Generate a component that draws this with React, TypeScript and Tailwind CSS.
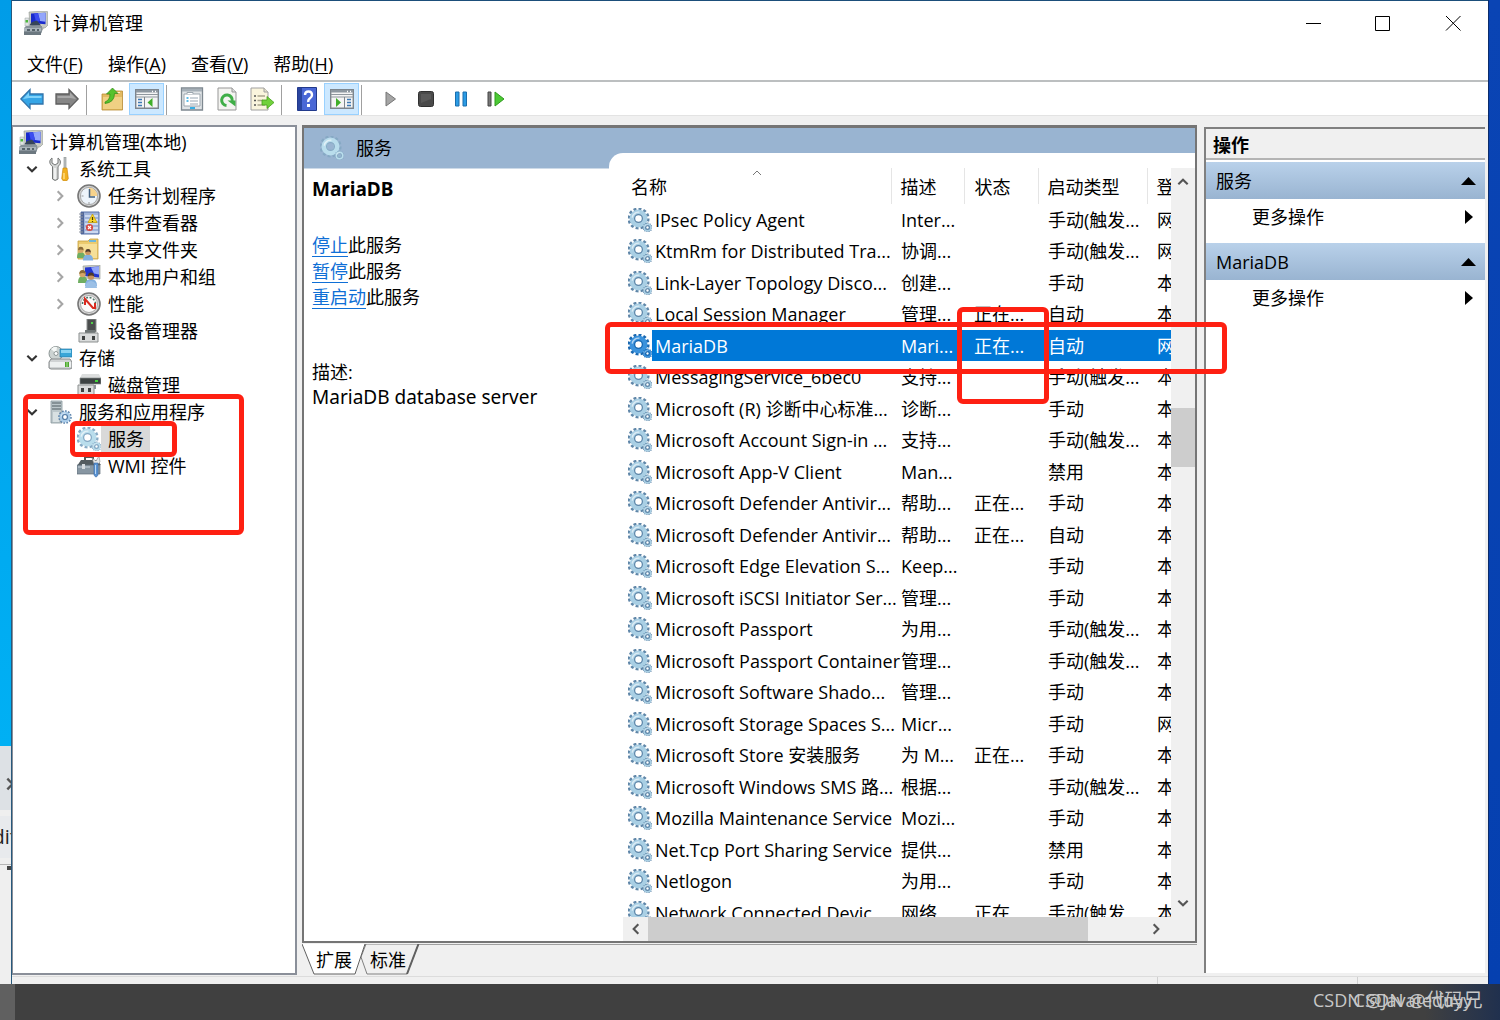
import React from "react";

type IconProps = { className?: string };

const svgBase = { viewBox: "0 0 24 24", "aria-hidden": true } as const;

function ComputerIcon({ className = "size-6 shrink-0" }: IconProps) {
  return (
    <svg {...svgBase} className={className}>
      <path d="M5 1 22 0l2 1v13l-3 3-15-3z" fill="#c9ccc4" stroke="#8f958f" strokeWidth=".6" />
      <path d="M7 2.500 21.500 1.800v11.400L7 12z" fill="#1a2bcc" />
      <path d="M14 2.200 21.500 1.800v9L16 10z" fill="#93a6fb" />
      <path d="M10 2.400 14 2.200 16 10 12 11z" fill="#3c4df0" />
      <path d="M1 7h4v8H1z" fill="#dfe3e3" stroke="#98a0a0" strokeWidth=".5" />
      <path d="M1.500 9h2.500v2.500H1.500z" fill="#4db83c" />
      <path d="M8 11 13 9.500l4 5H5z" fill="#36455a" />
      <path d="M14 17h6l-2 3h-3z" fill="#a8aca8" />
      <path d="M0 17 2 15h16v6l-2 3H0z" fill="#87929a" />
      <path d="M0 17h17v3H0z" fill="#aab4ba" />
      <path d="M3 18h3v2H3zM8 18h3v2H8zM13 18h2v2h-2z" fill="#55626a" />
      <path d="M0 21h17v3H0z" fill="#6c7880" />
    </svg>
  );
}

function Gear({ cx, cy, r, hole, fill, edge }: { cx: number; cy: number; r: number; hole: number; fill: string; edge: string }) {
  return (
    <g>
      <circle cx={cx} cy={cy} r={r} fill="none" stroke={edge} strokeWidth={r * 0.46} pathLength={24} strokeDasharray="1.150 .850" />
      <circle cx={cx} cy={cy} r={(r + hole) / 2} fill="none" stroke={fill} strokeWidth={r - hole} />
      <circle cx={cx} cy={cy} r={hole + 0.5} fill="none" stroke={edge} strokeWidth="1.200" />
      <path d={`M${cx - r * 0.7} ${cy - r * 0.1}A${r * 0.72} ${r * 0.72} 0 0 1 ${cx + r * 0.1} ${cy - r * 0.7}`} fill="none" stroke="#ffffff" strokeOpacity=".6" strokeWidth={r * 0.16} />
    </g>
  );
}

function ServiceIcon({ className = "size-6 shrink-0", tone = "normal" }: IconProps & { tone?: "normal" | "selected" | "pale" }) {
  const fill = tone === "selected" ? "#3b92dc" : tone === "pale" ? "#b9ddec" : "#a9cfe4";
  const edge = tone === "selected" ? "#1967b0" : tone === "pale" ? "#86a9c4" : "#5f86a8";
  return (
    <svg {...svgBase} className={className}>
      <Gear cx={10.500} cy={10.500} r={9} hole={3.400} fill={fill} edge={edge} />
      <Gear cx={19.500} cy={19.500} r={4} hole={1.400} fill={fill} edge={edge} />
    </svg>
  );
}

function ToolsIcon() {
  return (
    <svg {...svgBase} className="size-6 shrink-0">
      <path d="M4 1v5l3 2 3-2V1c3 2 3.500 6 0 8.500V22q-3 3-5.500 0V9.500C1 7 1 3 4 1z" fill="#d5d7d6" stroke="#747776" />
      <path d="M7 11v11" stroke="#fff" strokeWidth="1.300" />
      <path d="M16 0h2v12h-2z" fill="#bfc4c5" stroke="#858b8c" strokeWidth=".6" />
      <path d="M15 11h4l.5 4 .8 6.500q-.5 2.500-3.300 2.500t-3.300-2.500L14.500 15z" fill="#f2b01e" stroke="#c47f05" strokeWidth=".6" />
      <path d="M16 16v6" stroke="#ffe08a" strokeWidth="1.400" />
    </svg>
  );
}

function ClockIcon() {
  return (
    <svg {...svgBase} className="size-6 shrink-0">
      <circle cx="12" cy="12" r="11" fill="#d2d3d3" stroke="#777" strokeWidth="1.600" />
      <circle cx="12" cy="12" r="8.600" fill="#edf4fb" stroke="#9a9a9a" strokeWidth=".8" />
      <path d="M12 12V3.700A8.300 8.300 0 0 1 20.300 12z" fill="#f7d38c" />
      <path d="M12.500 5v8H18" fill="none" stroke="#45617f" strokeWidth="1.500" />
      <path d="M4.500 12h2M12 18v2" stroke="#999" />
    </svg>
  );
}

function EventIcon() {
  return (
    <svg {...svgBase} className="size-6 shrink-0">
      <path d="M4 1h18v22H4z" fill="#9fb3da" stroke="#5670a8" />
      <path d="M8 5h13M8 9h13M8 13h13M8 17h13M8 21h13" stroke="#dce6f8" strokeWidth="1.400" />
      <path d="M4 1h3v22H4z" fill="#50669a" />
      <path d="M2 3h4M2 6h4M2 9h4M2 12h4M2 15h4M2 18h4M2 21h4" stroke="#8d939e" />
      <path d="m15.500 3 4.500 8.500h-9z" fill="#f8d52a" stroke="#c39b00" strokeWidth=".7" />
      <path d="M15.500 6v3M15.500 10v1" stroke="#493b00" strokeWidth="1.200" />
      <circle cx="12.500" cy="16.500" r="3.600" fill="#d84a43" />
      <path d="m11 15 3 3m0-3-3 3" stroke="#fff" strokeWidth="1.100" />
    </svg>
  );
}

function People({ x, y }: { x: number; y: number }) {
  return (
    <g transform={`translate(${x} ${y})`}>
      <path d="M0 13q0-7 4.500-7T10 13z" fill="#6fae61" />
      <circle cx="4.500" cy="4" r="3.200" fill="#d6a768" />
      <path d="M1.300 4q0-4 3.200-4t3.200 4q-3-2-6.400 0z" fill="#8a6a36" />
      <path d="M7 16q0-7 6-7t6 7z" fill="#83b0df" />
      <circle cx="13" cy="6.500" r="3.200" fill="#c9945f" />
      <path d="M9.800 6.500q0-4 3.200-4t3.200 4q-3-2-6.400 0z" fill="#4d3a2c" />
    </g>
  );
}

function SharedFolderIcon() {
  return (
    <svg {...svgBase} className="size-6 shrink-0">
      <path d="M1 3h10l2-2h8v20H1z" fill="#eccb6f" stroke="#c79f3c" strokeWidth=".8" />
      <path d="M12 2h7v2h-7z" fill="#6fb7d9" />
      <path d="M2 6h18v14H2z" fill="#f6df98" />
      <g transform="translate(0 8) scale(.85)">
        <People x={0} y={1} />
      </g>
    </svg>
  );
}

function UsersIcon() {
  return (
    <svg {...svgBase} className="size-6 shrink-0">
      <path d="M6 1 23 0v14L7 13z" fill="#c9ccc4" stroke="#8f958f" strokeWidth=".6" />
      <path d="m8 2.500 14-1v11L8 11z" fill="#2236cf" />
      <path d="m14 2.500 8-1v8l-5-1z" fill="#91a5fa" />
      <People x={1} y={5} />
      <path d="M8 23q0-6 6-7 6 1 6 7z" fill="#9cc0e6" />
    </svg>
  );
}

function PerfIcon() {
  return (
    <svg {...svgBase} className="size-6 shrink-0">
      <circle cx="12" cy="12" r="11" fill="#d7d7d7" stroke="#777" strokeWidth="1.600" />
      <circle cx="12" cy="12" r="8.500" fill="#fbfbfb" stroke="#999" strokeWidth=".8" />
      <path d="M5.500 12a6.500 6.500 0 0 1 13 0" fill="none" stroke="#4a7466" strokeWidth="1.500" strokeDasharray="2 1.500" />
      <path d="M8 13V7l8 9h2v-5" fill="none" stroke="#d92b20" strokeWidth="2" />
    </svg>
  );
}

function DeviceIcon() {
  return (
    <svg {...svgBase} className="size-6 shrink-0">
      <path d="M10 0h9v13h-9z" fill="#4a4d4d" stroke="#8b8f8f" />
      <path d="M14 3h2v2h-2z" fill="#51d148" />
      <path d="M8 11h10v4H8z" fill="#6f7676" />
      <path d="M2 14h19v9H2z" fill="#dadcdc" stroke="#8b8f8f" />
      <path d="M5 17h3v4H5zM15 17h3v4h-3z" fill="#3f4242" />
    </svg>
  );
}

function StorageIcon() {
  return (
    <svg {...svgBase} className="size-6 shrink-0">
      <circle cx="8" cy="7.500" r="7" fill="#ccd3d2" stroke="#8e9796" />
      <path d="M8 7.500 3 3q3-3 6-2z" fill="#f5f8f7" />
      <circle cx="8" cy="7.500" r="2" fill="#fff" stroke="#8e9796" />
      <path d="M12 3h12v8H12z" fill="#39a6d8" stroke="#277aa6" strokeWidth=".7" />
      <path d="M13 4h10v3H13z" fill="#8bd3f1" />
      <path d="m3 13-2 3v6l2 1h19l2-1v-6l-2-3z" fill="#d0d3d4" stroke="#85898a" />
      <path d="M2 16h21v5H2z" fill="#edf0f0" />
      <path d="M17 16h4v5h-4z" fill="#4ca530" />
      <path d="M19 16v5" stroke="#a9e790" />
    </svg>
  );
}

function DiskIcon() {
  return (
    <svg {...svgBase} className="size-6 shrink-0">
      <path d="M5 1h17l2 4H3z" fill="#dcdede" />
      <path d="M3 5h21v6H3z" fill="#3d4343" stroke="#8b8f8f" strokeWidth=".7" />
      <path d="M18 7h3v2h-3z" fill="#42d43b" />
      <path d="M1 12h16v11H1z" fill="#dadcdc" stroke="#8b8f8f" />
      <path d="M4 15h3v4H4zM11 15h3v4h-3z" fill="#3f4242" />
      <path d="M17 12h2v4h-2z" fill="#90979a" />
    </svg>
  );
}

function ServerGearIcon() {
  return (
    <svg {...svgBase} className="size-6 shrink-0">
      <path d="M3 1h11v22H3z" fill="#bcc7cb" stroke="#89979d" strokeWidth=".8" />
      <path d="M4 3h9M4 6h9M4 9h9" stroke="#4e5c63" strokeWidth="1.200" />
      <path d="M5 12h6v10H5z" fill="#d8e0e2" />
      <Gear cx={17} cy={17} r={5.500} hole={2} fill="#a9cbe8" edge="#587fa8" />
    </svg>
  );
}

function ToolboxIcon() {
  return (
    <svg {...svgBase} className="size-6 shrink-0">
      <path d="M8 6V3h8v3" fill="none" stroke="#555" strokeWidth="2" />
      <path d="m0 12 4-6h16l4 5H0z" fill="#535b60" />
      <path d="M0 11h23v9H0z" fill="#8796a2" stroke="#5f6d78" strokeWidth=".7" />
      <path d="M1 13h12" stroke="#cad4dc" />
      <path d="M5 10h3v5H5z" fill="#d5dade" />
      <path d="m15 4 4 3 3-5 1 6-3 3-3-1z" fill="#e8e8e8" stroke="#8c8c8c" strokeWidth=".6" />
      <path d="M17 9h4v12q-2 4-4 0z" fill="#5b93d2" stroke="#3c69a4" strokeWidth=".6" />
      <path d="M18.500 11v9" stroke="#b9d8f6" />
    </svg>
  );
}

function ArrowIcon({ back }: { back?: boolean }) {
  return back ? (
    <svg {...svgBase} className="size-6">
      <path d="M.8 12 10 2.500V7h13v10H10v4.500z" fill="#35a5e6" stroke="#3173aa" strokeWidth="1.300" />
      <path d="M3 12 9 5.500V9h12.500v2H9z" fill="#7fd2fa" />
    </svg>
  ) : (
    <svg {...svgBase} className="size-6">
      <path d="M23.200 12 14 2.500V7H1v10h13v4.500z" fill="#868686" stroke="#5e5e5e" strokeWidth="1.300" />
      <path d="M21 12 15 5.500V9H2.500v2H15z" fill="#a9a9a9" />
    </svg>
  );
}

function FolderUpIcon() {
  return (
    <svg {...svgBase} className="size-6">
      <path d="M2 7h8l2-3h10.500v19H2z" fill="#e3bb62" stroke="#b98d36" strokeWidth=".8" />
      <path d="M14 5.500h6" stroke="#fff3c8" />
      <path d="M3 10h19v12H3z" fill="#f0d083" />
      <path d="M5 15q5-2 5-8H6.500l6-6 5.500 5.500h-3.500q0 9-9.500 10z" fill="#56c22c" stroke="#2f8b16" strokeWidth=".7" />
    </svg>
  );
}

function PaneIcon({ right }: { right?: boolean }) {
  return (
    <svg viewBox="0 0 24 20" aria-hidden className="h-5 w-6">
      <path d="M.7.700h22.600v18.600H.7z" fill="#f4f4f4" stroke="#7d858d" strokeWidth="1.400" />
      <path d="M1 1h22v2.500H1z" fill="#8d97a0" />
      <path d="M1 5.500h22M1 8h22" stroke="#8f979e" />
      <path d="M17 2.500h1M20 2.500h1" stroke="#fff" strokeWidth="1.400" />
      {right ? (
        <>
          <path d="M14.500 8v11" stroke="#7d858d" />
          <path d="m6 9 5 4.500L6 18z" fill="#3fae28" />
          <path d="M17 10.500h4M17 13.500h4M17 16.500h4" stroke="#3d7ab5" strokeWidth="1.500" />
        </>
      ) : (
        <>
          <path d="M9.500 8v11" stroke="#7d858d" />
          <path d="m17.500 9-5 4.500 5 4.500z" fill="#3fae28" />
          <path d="M3 10.500h4M3 13.500h4M3 16.500h4" stroke="#3d7ab5" strokeWidth="1.500" />
        </>
      )}
    </svg>
  );
}

function PropertiesIcon() {
  return (
    <svg {...svgBase} className="size-6">
      <path d="M1.500 1h21v22h-21z" fill="#dfe3e6" stroke="#7e8890" strokeWidth="1.300" />
      <path d="M2 2h20v2.500H2z" fill="#a5afb7" />
      <path d="M4 7h16v12H4z" fill="#fff" stroke="#9ca6ae" />
      <path d="M7 7V5.500h6V7" fill="#fff" stroke="#9ca6ae" />
      <path d="M6.500 11h2M6.500 14h2" stroke="#2da7df" strokeWidth="1.500" />
      <path d="M10 11h8M10 14h8M10 17h8" stroke="#98a6b3" />
      <path d="M10 21h5" stroke="#34aee5" strokeWidth="2" />
    </svg>
  );
}

function RefreshIcon() {
  return (
    <svg {...svgBase} className="size-6">
      <path d="M3 1h14l4 4v18H3z" fill="#f4f4f1" stroke="#979797" />
      <path d="M17 1v4h4" fill="#ddd" stroke="#979797" />
      <path d="M11.500 18.500A5.300 5.300 0 1 1 17.200 14" fill="none" stroke="#3fae47" strokeWidth="3" />
      <path d="M12.500 13.500h8v6z" fill="#3fae47" />
    </svg>
  );
}

function ExportIcon() {
  return (
    <svg {...svgBase} className="size-6">
      <path d="M1 1h13l4 4v18H1z" fill="#faf5dd" stroke="#a0a0a0" />
      <path d="M14 1v4h4" fill="#e5e0ca" stroke="#a0a0a0" />
      <path d="M4 9h2M4 13.500h2M4 18h2" stroke="#555" strokeWidth="1.500" />
      <path d="M7.500 9H15M7.500 13.500H13M7.500 18H15" stroke="#aaa58d" strokeWidth="1.500" />
      <path d="M12 13h5V9.500l7 6-7 6V18h-5z" fill="#72d13c" stroke="#449f1b" strokeWidth=".8" />
    </svg>
  );
}

function HelpIcon() {
  return (
    <svg viewBox="0 0 20 24" aria-hidden className="h-6 w-5">
      <path d="M.5.500h19v23H.5z" fill="#4a68d6" stroke="#223a8c" />
      <path d="M1 1h4v22H1z" fill="#2a459f" />
      <path d="M8 8Q8 4.500 11.500 4.500T15 8q0 2-2 3.200T11.300 15" fill="none" stroke="#fff" strokeWidth="2.400" />
      <path d="M10 17h3v3h-3z" fill="#fff" />
    </svg>
  );
}

function Chevron({ dir, className }: { dir: "up" | "down" | "left" | "right"; className: string }) {
  const paths = { up: "M2 8 6 4l4 4", down: "M2 4l4 4 4-4", left: "M8 2 4 6l4 4", right: "M4 2l4 4-4 4" };
  return (
    <svg viewBox="0 0 12 12" aria-hidden className={className}>
      <path d={paths[dir]} fill="none" stroke="currentColor" strokeWidth="1.800" />
    </svg>
  );
}

type TreeItem = { level: 0 | 1 | 2; label: string; icon: React.ReactNode; state?: "open" | "closed"; selected?: boolean };

const tree: TreeItem[] = [
  { level: 0, label: "计算机管理(本地)", icon: <ComputerIcon /> },
  { level: 1, label: "系统工具", icon: <ToolsIcon />, state: "open" },
  { level: 2, label: "任务计划程序", icon: <ClockIcon />, state: "closed" },
  { level: 2, label: "事件查看器", icon: <EventIcon />, state: "closed" },
  { level: 2, label: "共享文件夹", icon: <SharedFolderIcon />, state: "closed" },
  { level: 2, label: "本地用户和组", icon: <UsersIcon />, state: "closed" },
  { level: 2, label: "性能", icon: <PerfIcon />, state: "closed" },
  { level: 2, label: "设备管理器", icon: <DeviceIcon /> },
  { level: 1, label: "存储", icon: <StorageIcon />, state: "open" },
  { level: 2, label: "磁盘管理", icon: <DiskIcon /> },
  { level: 1, label: "服务和应用程序", icon: <ServerGearIcon />, state: "open" },
  { level: 2, label: "服务", icon: <ServiceIcon tone="pale" />, selected: true },
  { level: 2, label: "WMI 控件", icon: <ToolboxIcon /> },
];

const treePad = { 0: "pl-1.5", 1: "pl-3", 2: "pl-10" };

const services: [string, string, string, string, string][] = [
  ["IPsec Policy Agent", "Inter...", "", "手动(触发...", "网络服务"],
  ["KtmRm for Distributed Tra...", "协调...", "", "手动(触发...", "网络服务"],
  ["Link-Layer Topology Disco...", "创建...", "", "手动", "本地服务"],
  ["Local Session Manager", "管理...", "正在...", "自动", "本地系统"],
  ["MariaDB", "Mari...", "正在...", "自动", "网络服务"],
  ["MessagingService_6bec0", "支持...", "", "手动(触发...", "本地系统"],
  ["Microsoft (R) 诊断中心标准...", "诊断...", "", "手动", "本地系统"],
  ["Microsoft Account Sign-in ...", "支持...", "", "手动(触发...", "本地系统"],
  ["Microsoft App-V Client", "Man...", "", "禁用", "本地系统"],
  ["Microsoft Defender Antivir...", "帮助...", "正在...", "手动", "本地服务"],
  ["Microsoft Defender Antivir...", "帮助...", "正在...", "自动", "本地系统"],
  ["Microsoft Edge Elevation S...", "Keep...", "", "手动", "本地系统"],
  ["Microsoft iSCSI Initiator Ser...", "管理...", "", "手动", "本地系统"],
  ["Microsoft Passport", "为用...", "", "手动(触发...", "本地系统"],
  ["Microsoft Passport Container", "管理...", "", "手动(触发...", "本地服务"],
  ["Microsoft Software Shado...", "管理...", "", "手动", "本地系统"],
  ["Microsoft Storage Spaces S...", "Micr...", "", "手动", "网络服务"],
  ["Microsoft Store 安装服务", "为 M...", "正在...", "手动", "本地系统"],
  ["Microsoft Windows SMS 路...", "根据...", "", "手动(触发...", "本地系统"],
  ["Mozilla Maintenance Service", "Mozi...", "", "手动", "本地系统"],
  ["Net.Tcp Port Sharing Service", "提供...", "", "禁用", "本地服务"],
  ["Netlogon", "为用...", "", "手动", "本地系统"],
  ["Network Connected Devic...", "网络...", "正在...", "手动(触发...", "本地服务"],
];

const menus = [
  ["文件", "F"],
  ["操作", "A"],
  ["查看", "V"],
  ["帮助", "H"],
];

function ToolButton({ label, active, children }: { label: string; active?: boolean; children: React.ReactNode }) {
  return (
    <button
      aria-label={label}
      className={
        active
          ? "flex h-8 w-[35px] items-center justify-center border border-[#99d1ff] bg-[#cce8ff]"
          : "flex h-8 w-[35px] items-center justify-center"
      }
    >
      {children}
    </button>
  );
}

function Divider() {
  return <span className="mr-[7px] ml-0.5 h-[30px] w-px bg-[#a0a0a0]" />;
}

function TitleBar() {
  return (
    <header className="flex h-11 items-center bg-white pl-3">
      <ComputerIcon />
      <h1 className="ml-[5px] flex-1 text-[18px] leading-6">计算机管理</h1>
      <button aria-label="最小化" className="flex h-11 w-[70px] items-center justify-center">
        <svg viewBox="0 0 16 16" className="size-4" aria-hidden>
          <path d="M1 8.500h15" stroke="#000" />
        </svg>
      </button>
      <button aria-label="最大化" className="flex h-11 w-[70px] items-center justify-center">
        <svg viewBox="0 0 16 16" className="size-4" aria-hidden>
          <path d="M.5 1.500h14v14H.5z" fill="none" stroke="#000" />
        </svg>
      </button>
      <button aria-label="关闭" className="flex h-11 w-[70px] items-center justify-center">
        <svg viewBox="0 0 16 16" className="size-4" aria-hidden>
          <path d="m1 1 14.500 14.500m0-14.500L1 15.500" stroke="#000" />
        </svg>
      </button>
    </header>
  );
}

function ToolBar() {
  return (
    <div className="flex h-[34px] items-end border-b border-[#e3e3e3] bg-white pl-0.5">
      <ToolButton label="后退"><ArrowIcon back /></ToolButton>
      <ToolButton label="前进"><ArrowIcon /></ToolButton>
      <Divider />
      <ToolButton label="向上"><FolderUpIcon /></ToolButton>
      <ToolButton label="显示控制台树" active><PaneIcon /></ToolButton>
      <Divider />
      <ToolButton label="属性"><PropertiesIcon /></ToolButton>
      <ToolButton label="刷新"><RefreshIcon /></ToolButton>
      <ToolButton label="导出列表"><ExportIcon /></ToolButton>
      <Divider />
      <ToolButton label="帮助"><HelpIcon /></ToolButton>
      <ToolButton label="显示操作窗格" active><PaneIcon right /></ToolButton>
      <Divider />
      <div className="w-1" />
      <ToolButton label="启动服务">
        <svg viewBox="0 0 12 16" className="h-4 w-3" aria-hidden>
          <path d="M1 1v14l9.500-7z" fill="#a5a5a5" stroke="#777" />
        </svg>
      </ToolButton>
      <ToolButton label="停止服务">
        <svg viewBox="0 0 16 16" className="size-4" aria-hidden>
          <rect x=".5" y=".5" width="15" height="15" rx="2" fill="#4a4a4a" stroke="#303030" />
          <path d="M3 3h10v5L3 12z" fill="#5a5a5a" />
        </svg>
      </ToolButton>
      <ToolButton label="暂停服务">
        <svg viewBox="0 0 14 16" className="h-4 w-3.5" aria-hidden>
          <path d="M1.500 1h3.500v14H1.500zM9 1h3.500v14H9z" fill="#2b9be4" stroke="#1a6fae" />
        </svg>
      </ToolButton>
      <ToolButton label="重新启动服务">
        <svg viewBox="0 0 18 16" className="h-4 w-[18px]" aria-hidden>
          <path d="M1 1h3v14H1z" fill="#777" stroke="#444" />
          <path d="M8 1v14l9-7z" fill="#4cc935" stroke="#2f9b1d" />
        </svg>
      </ToolButton>
    </div>
  );
}

function TreePane() {
  return (
    <nav aria-label="控制台树" className="w-[285px] shrink-0 border-2 border-l border-[#8a8f99] bg-white pt-px">
      <ul>
        {tree.map((item) => (
          <li key={item.label} className={`flex h-[27px] items-center ${treePad[item.level]}`}>
            {item.level > 0 && (
              <span className={item.level === 1 ? "flex w-[23px] shrink-0" : "flex w-6 shrink-0"}>
                {item.state && (
                  <button aria-label={`${item.state === "open" ? "折叠" : "展开"}${item.label}`}>
                    <Chevron
                      dir={item.state === "open" ? "down" : "right"}
                      className={item.state === "open" ? "size-3.5 text-[#333]" : "size-3.5 text-[#a6a6a6]"}
                    />
                  </button>
                )}
              </span>
            )}
            {item.icon}
            <button
              className={
                item.selected
                  ? "flex h-[27px] items-center bg-[#d9d9d9] pr-1.5 pl-[7px] text-[18px] leading-6"
                  : "flex h-[27px] items-center pl-[7px] text-[18px] leading-6"
              }
            >
              {item.label}
            </button>
          </li>
        ))}
      </ul>
    </nav>
  );
}

function DetailColumn() {
  return (
    <section className="flex w-[305px] shrink-0 flex-col">
      <div className="flex h-[40px] items-center gap-3 pl-4">
        <ServiceIcon tone="pale" />
        <h2 className="text-[18px] leading-6">服务</h2>
      </div>
      <div className="flex-1 border-t border-[#cddae8] bg-white pl-2">
        <h3 className="pt-2 font-['Noto_Sans',sans-serif] text-[19px] leading-6 font-bold">MariaDB</h3>
        <div className="pt-[31px] text-[18px] leading-[26px]">
          <p><a href="#stop" className="text-[#0f6fd6] underline underline-offset-4">停止</a>此服务</p>
          <p><a href="#pause" className="text-[#0f6fd6] underline underline-offset-4">暂停</a>此服务</p>
          <p><a href="#restart" className="text-[#0f6fd6] underline underline-offset-4">重启动</a>此服务</p>
        </div>
        <div className="pt-[49px] text-[18px] leading-[26px]">
          <p>描述:</p>
          <p className="font-['Noto_Sans',sans-serif] text-[19px] leading-6">MariaDB database server</p>
        </div>
      </div>
    </section>
  );
}

function ServiceTable() {
  return (
    <div className="flex min-w-0 flex-1 flex-col overflow-hidden rounded-tl-[14px] bg-white pt-[15px] pl-[14px]">
      <div className="flex h-[749px]">
        <div className="min-w-0 flex-1 overflow-hidden">
          <table className="w-full table-fixed border-collapse text-left text-[18px] leading-6 whitespace-nowrap">
            <colgroup>
              <col />
              <col className="w-[73px]" />
              <col className="w-[74px]" />
              <col className="w-[109px]" />
              <col className="w-6" />
            </colgroup>
            <thead>
              <tr className="h-[36px]">
                <th className="relative border-r border-[#e5e5e5] p-0 pt-0.5 pl-2 font-normal">
                  名称
                  <span className="absolute top-0.5 left-1/2 -translate-x-1/2 text-[#777]">
                    <svg viewBox="0 0 10 6" className="h-1.5 w-2.5" aria-hidden>
                      <path d="m1 5 4-4 4 4" fill="none" stroke="currentColor" />
                    </svg>
                  </span>
                </th>
                <th className="border-r border-[#e5e5e5] p-0 pt-0.5 pl-[9px] font-normal">描述</th>
                <th className="border-r border-[#e5e5e5] p-0 pt-0.5 pl-2.5 font-normal">状态</th>
                <th className="border-r border-[#e5e5e5] p-0 pt-0.5 pl-[9px] font-normal">启动类型</th>
                <th className="overflow-hidden p-0 pt-0.5 pl-[9px] font-normal">登录为</th>
              </tr>
            </thead>
            <tbody>
              {services.map(([name, desc, status, start, logon], i) => {
                const selected = name === "MariaDB";
                return (
                  <tr key={i} className="odd:h-[31px] even:h-8">
                    <td className="p-0 pl-[5px]">
                      <div className="flex items-center">
                        <ServiceIcon tone={selected ? "selected" : "normal"} />
                        <span
                          className={
                            selected
                              ? "flex h-[31px] flex-1 items-center bg-[#0078d7] pl-[3px] text-white"
                              : "pl-[3px]"
                          }
                        >
                          {name}
                        </span>
                      </div>
                    </td>
                    {[desc, status, start, logon].map((cell, c) => (
                      <td key={c} className="overflow-hidden p-0">
                        <div
                          className={
                            selected
                              ? "flex h-[31px] items-center bg-[#0078d7] pl-2.5 text-white"
                              : "pl-2.5"
                          }
                        >
                          {cell}
                        </div>
                      </td>
                    ))}
                  </tr>
                );
              })}
            </tbody>
          </table>
        </div>
        <div className="flex w-6 flex-col items-center bg-[#f0f0f0] text-[#555]">
          <button aria-label="向上滚动" className="flex h-7 items-center"><Chevron dir="up" className="size-3.5" /></button>
          <div className="flex w-full flex-1 flex-col pt-[212px]">
            <div className="h-[59px] bg-[#cdcdcd]" />
          </div>
          <button aria-label="向下滚动" className="flex h-7 items-center"><Chevron dir="down" className="size-3.5" /></button>
        </div>
      </div>
      <div className="flex h-6 items-center bg-[#f0f0f0] pr-6 text-[#555]">
        <button aria-label="向左滚动" className="flex w-[25px] justify-center"><Chevron dir="left" className="size-3.5" /></button>
        <div className="h-full flex-1 pr-[53px]"><div className="h-full bg-[#cdcdcd]" /></div>
        <button aria-label="向右滚动" className="flex w-[30px] justify-center"><Chevron dir="right" className="size-3.5" /></button>
      </div>
    </div>
  );
}

function ViewTabs() {
  return (
    <div className="relative flex h-[31px] items-center border-t border-[#a0a0a0] text-[18px] leading-6">
      <svg viewBox="0 0 120 31" className="absolute -top-px left-0 h-[31px] w-[120px]" aria-hidden>
        <path d="M59 13 65 30h40L116.500 0H64z" fill="#f0f0f0" stroke="#808080" />
        <path d="M105 30 116.500 0" stroke="#606060" strokeWidth="2" />
        <path d="M0 0 12 30h41L63 0z" fill="#fff" />
        <path d="M0 0 12 30h41L63 0" fill="none" stroke="#606060" />
      </svg>
      <button className="relative pl-3.5">扩展</button>
      <button className="relative pl-[18px]">标准</button>
    </div>
  );
}

function ActionGroup({ title }: { title: string }) {
  return (
    <section className="pb-2">
      <h3>
        <button className="flex h-[37px] w-full items-center justify-between bg-linear-to-b from-[#b9d1ea] to-[#99b4d1] pr-2 pl-2.5 text-[18px] leading-6">
          {title}
          <svg viewBox="0 0 16 8" className="h-2 w-4" aria-hidden><path d="M0 8h15L7.500 0z" /></svg>
        </button>
      </h3>
      <button className="flex h-9 w-full items-center justify-between pr-2 pl-[46px] text-[18px] leading-6">
        更多操作
        <svg viewBox="0 0 12 16" className="h-4 w-3" aria-hidden><path d="M0 1v14l8-7z" /></svg>
      </button>
    </section>
  );
}

function ActionsPane() {
  return (
    <aside className="mt-0.5 mr-[3px] mb-0.5 w-[281px] shrink-0 border-t-2 border-l-2 border-[#808080] bg-white">
      <h2 className="mb-0.5 flex h-[31px] items-center border-b-2 border-[#b4b4b4] bg-[#f0f0f0] pt-0.5 pl-[7px] text-[18px] leading-6 font-bold">操作</h2>
      <ActionGroup title="服务" />
      <ActionGroup title="MariaDB" />
    </aside>
  );
}

function DesktopEdge() {
  return (
    <div className="flex w-3 shrink-0 flex-col overflow-hidden border-r border-[#27597c] bg-[#efefef]">
      <div className="h-[746px] bg-linear-to-b from-[#009ce8] to-[#00b0f4]" />
      <div className="flex h-16 items-center justify-center bg-[#dde1e5] pt-3 pl-2 text-[#555]"><Chevron dir="right" className="size-4 shrink-0" /></div>
      <div className="my-1.5 flex h-[42px] items-center justify-end bg-[#e8eaed] text-[20px] leading-6 text-[#222]"><span className="-mr-1.5">dit</span></div>
      <div className="flex flex-1 justify-end border-t border-[#b5b5b5]"><span className="mt-px h-1 w-1 bg-[#444]" /></div>
    </div>
  );
}

export default function App() {
  return (
    <div className="relative flex min-h-screen flex-col overflow-hidden bg-[#404040] font-['Open_Sans','Noto_Sans_CJK_SC',sans-serif] text-black">
      <div className="flex flex-1">
        <DesktopEdge />
        <main className="flex min-w-0 flex-1 flex-col border-t border-[#1b4e7a] bg-[#f0f0f0]">
          <TitleBar />
          <div className="flex h-[37px] items-center gap-[25px] border-b-2 border-[#bcbfc0] bg-white pt-0.5 pl-[15px] text-[18px] leading-6">
            {menus.map(([label, key]) => (
              <button key={key}>
                {label}(<span className="underline underline-offset-2">{key}</span>)
              </button>
            ))}
          </div>
          <ToolBar />
          <div className="mt-[9px] flex flex-1">
            <TreePane />
            <div className="ml-[5px] flex min-w-0 flex-1 flex-col">
              <div className="flex flex-1 border-2 border-t-[3px] border-[#757575] bg-[#99b4d1]">
                <DetailColumn />
                <div className="flex min-w-0 flex-1 flex-col pt-[25px]">
                  <ServiceTable />
                </div>
              </div>
              <div className="mt-px"><ViewTabs /></div>
            </div>
            <div className="w-[7px]" />
            <ActionsPane />
          </div>
          <footer className="mt-px flex h-2 justify-end border-t border-[#dcdcdc]">
            <span className="w-[200px] border-l border-[#d0d0d0]" />
            <span className="w-[131px] border-l border-[#d0d0d0]" />
          </footer>
        </main>
        <div className="w-3 shrink-0 border-l border-[#0b2b6b] bg-linear-to-b from-[#0a44b4] to-[#0540b0]" />
      </div>
      <div className="flex h-9 bg-linear-to-r from-[#404040] from-95% to-[#20304e]">
        <div className="w-[15px] bg-[#606060]" />
      </div>

      <p className="absolute bottom-1.5 left-[1313px] text-[18px] leading-7 whitespace-nowrap text-[#c8c8c8]">CSDN @Javateduyy</p>
      <p className="absolute bottom-1.5 left-[1353px] text-[19px] leading-7 whitespace-nowrap text-[#c8c8c8]">CSDN @代码兄</p>

      <div className="pointer-events-none absolute top-[394px] left-[23px] h-[141px] w-[221px] rounded-md border-[5px] border-[#fe2012]" />
      <div className="pointer-events-none absolute top-[421px] left-[70px] h-9 w-[107px] rounded-md border-[5px] border-[#fe2012]" />
      <div className="pointer-events-none absolute top-[322px] left-[605px] h-[52px] w-[622px] rounded-md border-[5px] border-[#fe2012]" />
      <div className="pointer-events-none absolute top-[307px] left-[957px] h-[97px] w-[92px] rounded-md border-[5px] border-[#fe2012]" />
    </div>
  );
}
